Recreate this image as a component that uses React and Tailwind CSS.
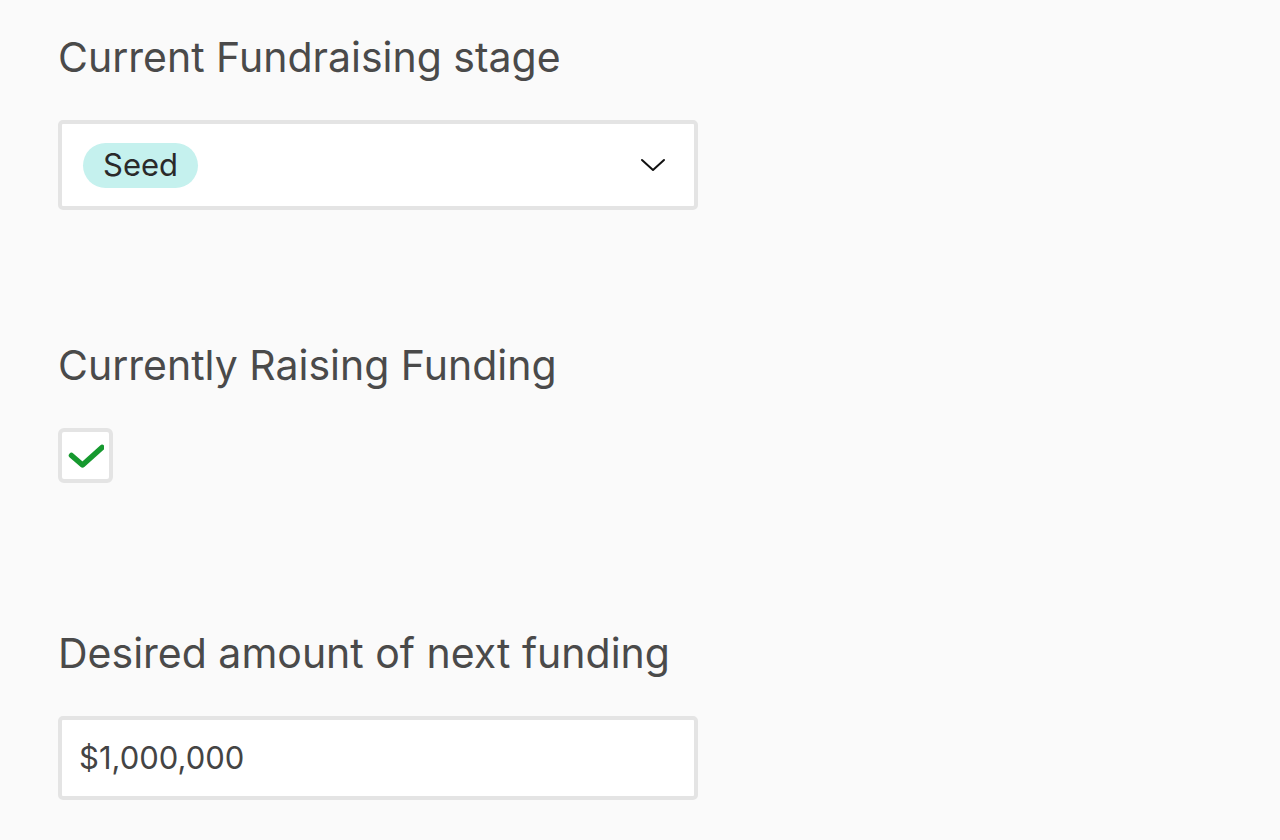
import React from 'react';

const Label = ({ children, className = '' }) => (
  <h2 className={`text-[41px] leading-[48px] text-[#4a4a4a] font-normal ${className}`}>{children}</h2>
);

const App = () => {
  return (
    <div className="min-h-[840px] w-full bg-[#fafafa] pl-[58px] pt-[33px]" style={{ fontFamily: 'Inter, "Noto Sans", sans-serif' }}>
      <Label>Current Fundraising stage</Label>
      <div className="mt-[39px] flex h-[90px] w-[640px] items-center justify-between rounded-[5px] border-4 border-[#e4e4e4] bg-white pl-[21px] pr-[28px]">
        <span className="flex h-[45px] items-center rounded-full bg-[#c5f1ee] px-[20px] text-[31px] text-[#2a2a2a]">Seed</span>
        <svg width="26" height="16" viewBox="0 0 26 16" fill="none">
          <path d="M2 3 L13 13 L24 3" stroke="#111" strokeWidth="2" strokeLinecap="round" strokeLinejoin="round" />
        </svg>
      </div>

      <Label className="mt-[131px]">Currently Raising Funding</Label>
      <div className="mt-[39px] flex h-[55px] w-[55px] items-center justify-center rounded-[6px] border-4 border-[#e4e4e4] bg-white">
        <svg width="36" height="28" viewBox="0 0 36 28" fill="none">
          <path d="M3.5 13.5 L14.5 23 L34 5.5" stroke="#16992f" strokeWidth="5.5" strokeLinecap="round" strokeLinejoin="round" />
        </svg>
      </div>

      <Label className="mt-[146px]">Desired amount of next funding</Label>
      <div className="mt-[39px] flex h-[84px] w-[640px] items-center rounded-[5px] border-4 border-[#e4e4e4] bg-white pl-[17px]">
        <span className="text-[31px] text-[#444]">$1,000,000</span>
      </div>
    </div>
  );
};

export default App;
